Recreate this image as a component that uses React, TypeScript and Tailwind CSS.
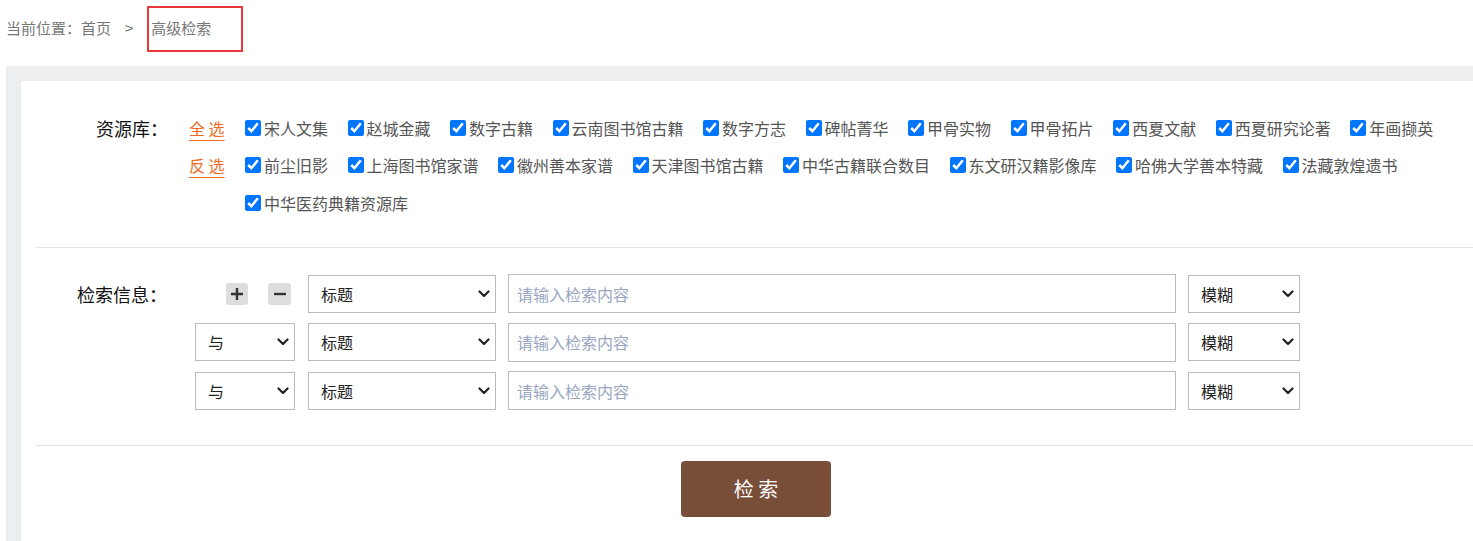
import React from 'react';

const row1 = ['宋人文集', '赵城金藏', '数字古籍', '云南图书馆古籍', '数字方志', '碑帖菁华', '甲骨实物', '甲骨拓片', '西夏文献', '西夏研究论著', '年画撷英'];
const row2 = ['前尘旧影', '上海图书馆家谱', '徽州善本家谱', '天津图书馆古籍', '中华古籍联合数目', '东文研汉籍影像库', '哈佛大学善本特藏', '法藏敦煌遗书', '中华医药典籍资源库'];

function Chevron() {
  return (
    <svg className="pointer-events-none absolute right-[6px] top-1/2 -translate-y-1/2" width="12" height="8" viewBox="0 0 12 8">
      <path d="M1.5 1.5 L6 6 L10.5 1.5" fill="none" stroke="#222" strokeWidth="2.2" strokeLinecap="round" strokeLinejoin="round" />
    </svg>
  );
}

function Select({ value, options, className }: { value: string; options: string[]; className: string }) {
  return (
    <div className={`relative h-[38px] ${className}`}>
      <select
        defaultValue={value}
        className="h-full w-full appearance-none border border-[#bbbbbb] bg-white pl-[12px] pr-6 text-[16px] text-[#222] outline-none"
      >
        {options.map((o) => (
          <option key={o} value={o}>{o}</option>
        ))}
      </select>
      <Chevron />
    </div>
  );
}

function Item({ label }: { label: string }) {
  return (
    <label className="mr-[19.5px] flex h-[37.5px] items-center">
      <input type="checkbox" defaultChecked className="m-0 h-4 w-4 accent-[#0075ff]" />
      <span className="ml-[3px] text-[16px] leading-none text-[#555]">{label}</span>
    </label>
  );
}

function SearchRow({ first }: { first?: boolean }) {
  return (
    <div className="flex h-[38px] items-center">
      {first ? (
        <div className="flex w-[272px] items-center">
          <span className="ml-[41px] w-[149px] text-[18px] leading-none text-[#111]">检索信息：</span>
          <button className="flex h-[22px] w-[22px] items-center justify-center rounded-[3px] bg-[#dddddd]">
            <svg width="14" height="14" viewBox="0 0 14 14">
              <path d="M7 1 V13 M1 7 H13" stroke="#333" strokeWidth="2.4" />
            </svg>
          </button>
          <button className="ml-[20px] flex h-[22px] w-[23px] items-center justify-center rounded-[3px] bg-[#dddddd]">
            <svg width="14" height="14" viewBox="0 0 14 14">
              <path d="M1 7 H13" stroke="#333" strokeWidth="2.4" />
            </svg>
          </button>
        </div>
      ) : (
        <div className="flex w-[272px] justify-start pl-[159px]">
          <Select value="与" options={['与', '或', '非']} className="w-[100px]" />
        </div>
      )}
      <Select value="标题" options={['标题', '作者', '全文']} className="w-[188px]" />
      <input
        placeholder="请输入检索内容"
        className="ml-[12px] h-[39px] w-[668px] border border-[#bbbbbb] pl-[8px] text-[16px] outline-none placeholder:text-[#98a6c2]"
      />
      <Select value="模糊" options={['模糊', '精确']} className="ml-[12px] w-[112px]" />
    </div>
  );
}

export default function App() {
  return (
    <div className="h-[541px] w-full overflow-hidden bg-white font-['Noto_Sans_CJK_SC','Liberation_Sans',sans-serif]">
      <div className="flex h-[66px] items-start pl-[6px] pt-[6px]">
        <div className="flex h-[46px] items-center text-[15px] leading-none text-[#777]">
          <span className="mb-[3px]">当前位置：首页</span>
          <span className="mb-[3px] ml-[14px]">&gt;</span>
          <span className="ml-[14px] flex h-[46px] w-[96px] items-center border-2 border-[#e8383b] pb-[3px] pl-[2px]">高级检索</span>
        </div>
      </div>

      <div className="ml-[6px] w-[1500px] bg-[#eceef0] px-[15px] pt-[15px]">
        <div className="bg-white px-[15px]">
          <div className="flex border-b border-[#e2e2e2] pb-[25px] pt-[28px]">
            <div className="flex h-[37.5px] w-[153px] items-center pl-[60px] text-[18px] leading-none text-[#111]">资源库：</div>
            <div className="flex w-[56px] flex-col">
              <a className="flex h-[37.5px] items-center text-[16px] leading-none text-[#ee6b22] underline underline-offset-[5px]">全 选</a>
              <a className="flex h-[37.5px] items-center text-[16px] leading-none text-[#ee6b22] underline underline-offset-[5px]">反 选</a>
            </div>
            <div className="flex w-[1231px] flex-wrap">
              {[...row1, ...row2].map((l) => (
                <Item key={l} label={l} />
              ))}
            </div>
          </div>

          <div className="flex flex-col gap-[10.5px] border-b border-[#e2e2e2] pb-[35px] pt-[27px]">
            <SearchRow first />
            <SearchRow />
            <SearchRow />
          </div>

          <div className="flex justify-center pb-[40px] pt-[15px]">
            <button className="h-[56px] w-[150px] rounded-[4px] bg-[#784e39] text-[20px] text-white">检 索</button>
          </div>
        </div>
      </div>
    </div>
  );
}
